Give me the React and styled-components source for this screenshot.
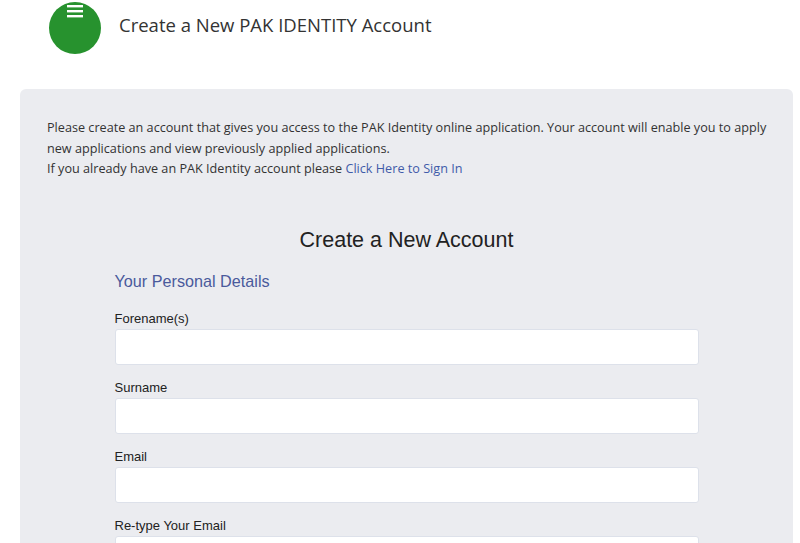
import styled, { createGlobalStyle } from 'styled-components';

const GlobalStyle = createGlobalStyle`
    body {
        margin: 0;
        background: #fff;
        font-family: "Open Sans", "Liberation Sans", sans-serif;
        color: #333;
    }
`

const fields = ['Forename(s)', 'Surname', 'Email', 'Re-type Your Email'];

const MenuIcon = () => (
    <svg width="16" height="14" viewBox="0 0 16 14">
        <rect x="0" y="1" width="16" height="2.4" fill="#fff" />
        <rect x="0" y="6" width="16" height="2.4" fill="#fff" />
        <rect x="0" y="11" width="16" height="2.4" fill="#fff" />
    </svg>
);

const App = () => {
    return (
        <>
            <GlobalStyle />
            <Header>
                <Badge><MenuIcon /></Badge>
                <PageTitle>Create a New PAK IDENTITY Account</PageTitle>
            </Header>
            <Panel>
                <Intro>
                    Please create an account that gives you access to the PAK Identity online application. Your account will enable you to apply new applications and view previously applied applications.<br />
                    If you already have an PAK Identity account please <Link href="#">Click Here to Sign In</Link>
                </Intro>
                <Form>
                    <FormTitle>Create a New Account</FormTitle>
                    <Section>Your Personal Details</Section>
                    {fields.map(f => (
                        <Field key={f}>
                            <Label>{f}</Label>
                            <Input type="text" />
                        </Field>
                    ))}
                </Form>
            </Panel>
        </>
    );
}

export default App;

const Header = styled.div`
    display: flex;
    align-items: center;
    gap: 18px;
    padding: 2px 0 0 49px;
    height: 52px;
`

const Badge = styled.div`
    width: 52px;
    height: 52px;
    border-radius: 50%;
    background: #27922e;
    display: flex;
    justify-content: center;
    align-items: flex-start;
    padding-top: 2px;
    box-sizing: border-box;
`

const PageTitle = styled.h1`
    margin: 0 0 8px;
    font-size: 18.5px;
    font-weight: 400;
    color: #333;
`

const Panel = styled.div`
    margin: 35px 7px 0 20px;
    background: #ebecf0;
    border-radius: 6px;
    padding: 28px 27px 40px;
    min-height: 500px;
`

const Intro = styled.p`
    margin: 0 -14px 0 0;
    font-size: 12.65px;
    line-height: 20.5px;
    color: #333;
`

const Link = styled.a`
    color: #3f5ba9;
    text-decoration: none;
`

const Form = styled.div`
    width: 584px;
    margin: 0 auto;
    font-family: "Liberation Sans", Arial, sans-serif;
`

const FormTitle = styled.h2`
    margin: 49px 0 0;
    font-size: 21.5px;
    font-weight: 400;
    text-align: center;
    color: #222;
`

const Section = styled.h3`
    margin: 19px 0 0;
    font-size: 16.2px;
    font-weight: 400;
    color: #4a5a9c;
`

const Field = styled.div`
    display: flex;
    flex-direction: column;
    margin-top: 20px;
    & + & {
        margin-top: 15px;
    }
`

const Label = styled.label`
    font-size: 13px;
    line-height: 15px;
    color: #222;
    margin-bottom: 3px;
`

const Input = styled.input`
    height: 36px;
    box-sizing: border-box;
    border: 1px solid #dde1ea;
    border-radius: 3px;
    background: #fff;
`
